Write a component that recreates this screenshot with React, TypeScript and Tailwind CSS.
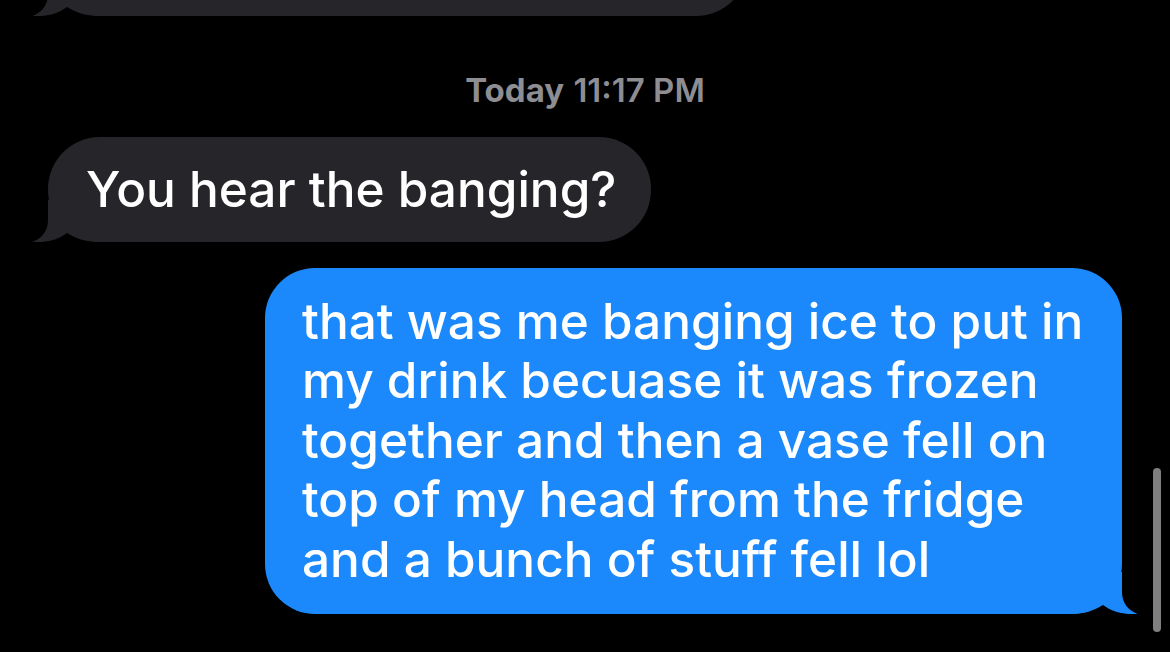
const Tail = ({ fill, flip }: { fill: string; flip?: boolean }) => (
  <svg
    width="68"
    height="42"
    viewBox="0 0 68 42"
    className={`absolute bottom-0 ${flip ? 'right-[-16px] -scale-x-100' : 'left-[-16px]'}`}
  >
    <path d="M16 0 L16 20 C16 31 10 38 0.5 42 C13 43 26 40 35 33 C43 38 53 42 68 42 L68 0 Z" fill={fill} />
  </svg>
);

const messageFont = { fontFamily: 'Inter, "Liberation Sans", sans-serif' };

export default function App() {
  return (
    <div className="relative h-[652px] w-full overflow-hidden bg-black text-white" style={messageFont}>
      <div className="flex flex-col">
        {/* previous message, scrolled mostly out of view */}
        <div className="relative ml-[48px] -mt-[88px] h-[104px] w-[700px] rounded-[52px] bg-[#262529]">
          <Tail fill="#262529" />
        </div>

        <div className="mt-[54px] text-center text-[33px] leading-[40px] text-[#8d8d92]">
          <span className="font-bold">Today</span> <span className="font-semibold">11:17 PM</span>
        </div>

        {/* incoming */}
        <div className="relative ml-[48px] mt-[27px] w-[603px] rounded-[52px] bg-[#262529] pl-[38px] pt-[23px] pb-[22px]">
          <p className="whitespace-nowrap text-[49.5px] font-medium leading-[59.5px]">
            You hear the banging?
          </p>
          <Tail fill="#262529" />
        </div>

        {/* outgoing */}
        <div className="relative ml-auto mr-[48px] mt-[26px] w-[857px] rounded-[50px] bg-[#1b89fb] pl-[37px] pt-[24px] pb-[25px]">
          <p className="whitespace-nowrap text-[49.5px] font-medium leading-[59.5px]">
            that was me banging ice to put in
            <br />
            my drink becuase it was frozen
            <br />
            together and then a vase fell on
            <br />
            top of my head from the fridge
            <br />
            and a bunch of stuff fell lol
          </p>
          <Tail fill="#1b89fb" flip />
        </div>
      </div>

      {/* scroll indicator */}
      <div className="absolute right-[9px] top-[468px] h-[164px] w-[8px] rounded-full bg-[#7f7f7f]" />
    </div>
  );
}
